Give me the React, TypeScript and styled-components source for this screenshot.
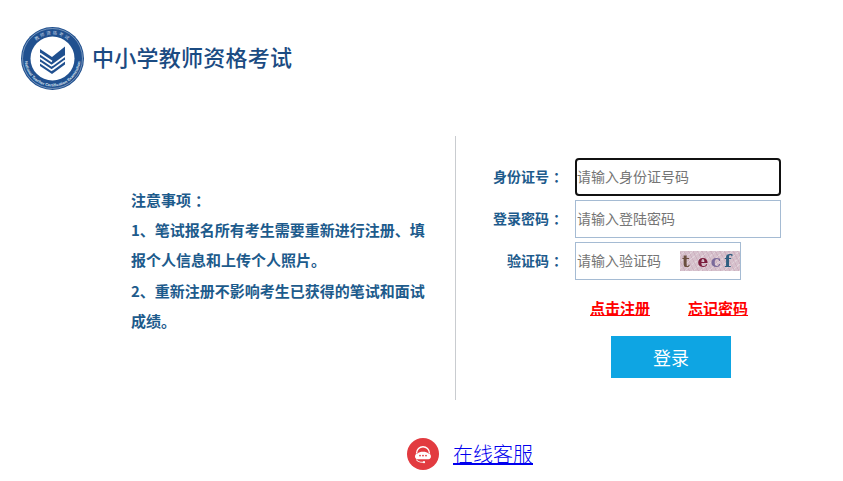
import styled, { createGlobalStyle } from 'styled-components'

const GlobalStyle = createGlobalStyle`
  html, body {
    margin: 0;
    padding: 0;
    background: #fff;
  }
  body {
    font-family: "Liberation Serif", "Noto Sans CJK SC", serif;
  }
`

const Page = styled.div`
  width: 843px;
  height: 481px;
  overflow: hidden;
`

const Header = styled.header`
  display: flex;
  align-items: center;
  gap: 8px;
  padding: 27px 0 0 21px;
  height: 62px;
`

const Title = styled.h1`
  margin: 0 0 5px;
  font: 500 22px/1 "Noto Sans CJK SC", sans-serif;
  letter-spacing: 0.25px;
  color: #1b4b82;
`

const Main = styled.main`
  display: flex;
  height: 264px;
  margin-top: 47px;
`

const NoticeColumn = styled.section`
  width: 456px;
  box-sizing: border-box;
  padding: 49px 27px 0 131px;
  border-right: 1px solid #c9ccd0;
`

const NoticeLine = styled.p`
  margin: 0;
  font: 700 15px/30.2px "Noto Sans CJK SC", sans-serif;
  color: #1d5b8c;
`

const Colon = styled.span`
  margin: 0 -4px 0 4px;
`

const FormColumn = styled.section`
  display: flex;
  flex-direction: column;
  gap: 4px;
  padding-top: 22px;
`

const Row = styled.div`
  display: flex;
  align-items: center;
  height: 38px;
`

const Label = styled.label`
  width: 107px;
  margin-right: 12px;
  padding-bottom: 2px;
  text-align: right;
  font: 700 14px "Noto Sans CJK SC", sans-serif;
  color: #1d5b8c;
`

const Input = styled.input`
  width: 206px;
  height: 38px;
  box-sizing: border-box;
  padding: 0 1px 2px;
  border: 1px solid #a5bbd3;
  outline: none;
  font: 14px "Noto Sans CJK SC", sans-serif;
  color: #333;
  caret-color: transparent;

  &::placeholder {
    color: #757575;
  }

  &:focus {
    border: 2px solid #111;
    border-radius: 4px;
    padding: 0 0 2px;
  }
`

const CaptchaField = styled.div`
  display: flex;
  align-items: center;
  width: 166px;
  height: 38px;
  box-sizing: border-box;
  border: 1px solid #a5bbd3;
`

const CaptchaInput = styled.input`
  width: 104px;
  box-sizing: border-box;
  padding: 0 1px 2px;
  border: 0;
  outline: none;
  font: 14px "Noto Sans CJK SC", sans-serif;

  &::placeholder {
    color: #757575;
  }
`

const Captcha = styled.div`
  display: flex;
  align-items: center;
  width: 60px;
  height: 20px;
  box-sizing: border-box;
  background:
    repeating-linear-gradient(63deg, rgba(190, 150, 172, 0.35) 0 1px, transparent 1px 4px),
    repeating-linear-gradient(-40deg, rgba(235, 225, 230, 0.5) 0 1px, transparent 1px 5px),
    #d6c1cc;
`

const CaptchaLetter = styled.span<{ $color: string; $offset: number }>`
  width: 12px;
  margin-left: ${p => p.$offset}px;
  text-align: center;
  font: 700 17px/20px "DejaVu Serif", serif;
  color: ${p => p.$color};
  filter: blur(0.4px);
`

const Links = styled.div`
  display: flex;
  gap: 38px;
  margin: 14px 0 0 134px;
`

const TextLink = styled.a`
  font: 700 15px/20px "Noto Sans CJK SC", sans-serif;
  color: #f00;
  text-decoration: underline;
  cursor: pointer;
`

const LoginButton = styled.button`
  width: 120px;
  height: 42px;
  margin: 14px 0 0 155px;
  border: 0;
  background: #0ea5e3;
  color: #fff;
  font: 18px "Noto Sans CJK SC", sans-serif;
  cursor: pointer;
`

const Footer = styled.footer`
  display: flex;
  align-items: center;
  gap: 14px;
  margin-top: 38px;
  padding-left: 407px;
`

const ServiceLink = styled.a`
  font: 300 20px/24px "Noto Sans CJK SC", serif;
  color: #00e;
  text-decoration: underline;
  cursor: pointer;
`

const Logo = () => (
  <svg width="63" height="63" viewBox="0 0 63 63">
    <defs>
      <path id="ringTop" d="M 7.5 31.5 A 24 24 0 0 1 55.5 31.5" />
      <path id="ringBottom" d="M 3.5 31.5 A 28 28 0 0 0 59.5 31.5" />
    </defs>
    <circle cx="31.5" cy="31.5" r="31.5" fill="#20508f" />
    <circle cx="31.5" cy="31.5" r="30" fill="none" stroke="#c9d6e6" strokeWidth="0.5" />
    <circle cx="31.5" cy="31.5" r="22" fill="#fff" />
    <text fontFamily="Noto Sans CJK SC, sans-serif" fontSize="4.4" fill="#c9d6e6" letterSpacing="1.6">
      <textPath href="#ringTop" startOffset="50%" textAnchor="middle">教师资格考试</textPath>
    </text>
    <text fontFamily="Liberation Sans, sans-serif" fontSize="4" fill="#dfe7f1" fontWeight="700">
      <textPath href="#ringBottom" startOffset="50%" textAnchor="middle">National Teacher Certification Examination</textPath>
    </text>
    <path d="M31 30 L44 19.5 V37.5 L31 47 Z" fill="#20508f" />
    <path d="M31 30 L19 22 V39 L31 47 Z" fill="#20508f" />
    <path
      d="M19 26.5 L31 34.5 M19 31 L31 39 M19 35.5 L31 43.5 M31 38.5 L44 29 M31 43 L44 33.5"
      stroke="#fff"
      strokeWidth="1.6"
      fill="none"
    />
  </svg>
)

const ServiceIcon = () => (
  <svg width="32" height="32" viewBox="0 0 32 32">
    <circle cx="16" cy="16" r="16" fill="#e23b40" />
    <path
      d="M9.5 15.5 C9.5 6.5 22.5 6.5 22.5 15.5"
      fill="none"
      stroke="#fff"
      strokeWidth="1.4"
    />
    <path
      d="M10.5 15.5 C12.5 13 19.5 13 21.5 15.5 C24.8 15.8 24.8 21 21.5 21.2 H10.5 C7.2 21 7.2 15.8 10.5 15.5 Z"
      fill="#fff"
    />
    <circle cx="13" cy="17.6" r="0.9" fill="#e23b40" />
    <circle cx="16" cy="17.6" r="0.9" fill="#e23b40" />
    <circle cx="19" cy="17.6" r="0.9" fill="#e23b40" />
    <path d="M9.5 21.5 C10 23.7 13 24.2 16 24.2" fill="none" stroke="#fff" strokeWidth="1.1" />
    <circle cx="17" cy="24.2" r="1.1" fill="#fff" />
  </svg>
)

const captchaLetters = [
  { char: 't', color: '#6b5040', offset: 0 },
  { char: 'e', color: '#7a1c3c', offset: 5 },
  { char: 'c', color: '#7a6a9a', offset: 1 },
  { char: 'f', color: '#2e5e80', offset: 0 },
]

export default function App() {
  return (
    <Page>
      <GlobalStyle />
      <Header>
        <Logo />
        <Title>中小学教师资格考试</Title>
      </Header>
      <Main>
        <NoticeColumn>
          <NoticeLine>注意事项<Colon>：</Colon></NoticeLine>
          <NoticeLine>1、笔试报名所有考生需要重新进行注册、填报个人信息和上传个人照片。</NoticeLine>
          <NoticeLine>2、重新注册不影响考生已获得的笔试和面试成绩。</NoticeLine>
        </NoticeColumn>
        <FormColumn>
          <Row>
            <Label>身份证号<Colon>：</Colon></Label>
            <Input autoFocus placeholder="请输入身份证号码" />
          </Row>
          <Row>
            <Label>登录密码<Colon>：</Colon></Label>
            <Input type="password" placeholder="请输入登陆密码" />
          </Row>
          <Row>
            <Label>验证码<Colon>：</Colon></Label>
            <CaptchaField>
              <CaptchaInput placeholder="请输入验证码" />
              <Captcha>
                {captchaLetters.map(l => (
                  <CaptchaLetter key={l.char} $color={l.color} $offset={l.offset}>{l.char}</CaptchaLetter>
                ))}
              </Captcha>
            </CaptchaField>
          </Row>
          <Links>
            <TextLink>点击注册</TextLink>
            <TextLink>忘记密码</TextLink>
          </Links>
          <LoginButton>登录</LoginButton>
        </FormColumn>
      </Main>
      <Footer>
        <ServiceIcon />
        <ServiceLink>在线客服</ServiceLink>
      </Footer>
    </Page>
  )
}
